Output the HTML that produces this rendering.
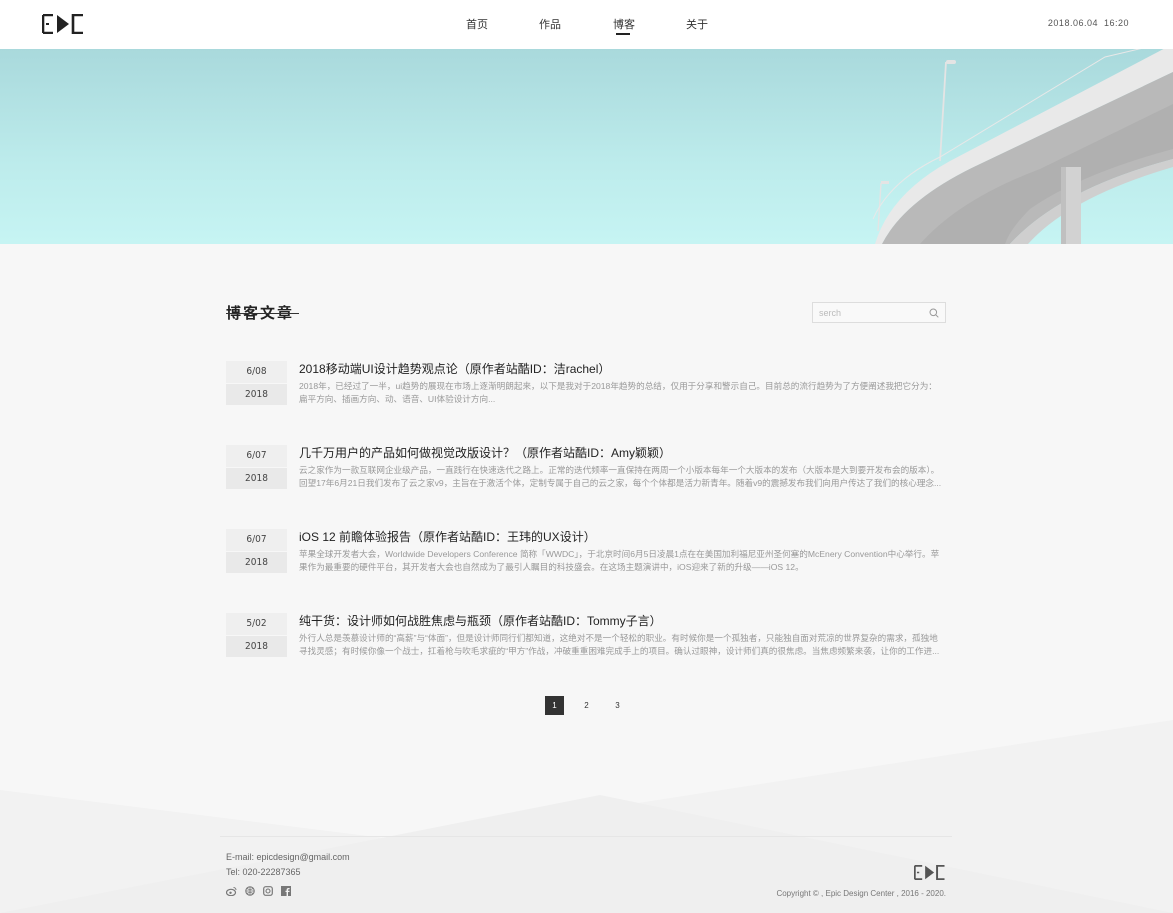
<!DOCTYPE html>
<html><head><meta charset="utf-8">
<style>
*{margin:0;padding:0;box-sizing:border-box}
body{width:1173px;height:913px;overflow:hidden;background:#f7f7f7;font-family:"Liberation Sans","Noto Sans CJK SC",sans-serif;position:relative;color:#333}
.hdr{position:absolute;left:0;top:0;width:1173px;height:49px;background:#fff}
.nav a{position:absolute;top:16px;font-size:11px;color:#333;text-decoration:none}
.date{position:absolute;right:44px;top:18px;font-size:9px;color:#555;letter-spacing:.5px}
.banner{position:absolute;left:0;top:49px;width:1173px;height:195px;background:linear-gradient(180deg,#a9d9dc 0%,#bdecec 60%,#c6f4f3 100%);overflow:hidden}
h2{position:absolute;left:226px;top:302px;font-size:15px;font-weight:bold;letter-spacing:2px;color:#222}
.strike{position:absolute;left:226px;top:313px;width:73px;height:1px;background:#333}
.search{position:absolute;left:812px;top:302px;width:134px;height:21px;border:1px solid #ddd;background:#f9f9f9;font-size:9px;color:#bbb;padding:5px 6px}
.post{position:absolute;left:226px;width:720px}
.d1,.d2{position:absolute;left:0;width:61px;height:22px;font-size:10px;color:#444;text-align:center;line-height:22px;font-family:"DejaVu Sans Condensed","Liberation Sans",sans-serif}
.d1{top:0;background:#efefef}.d2{top:22px;background:#e9e9e9;border-top:1px solid #f7f7f7}
.t{position:absolute;left:73px;top:-1px;font-size:12px;color:#222;white-space:nowrap}
.p{position:absolute;left:73px;top:19px;font-size:8.6px;color:#999;line-height:13px;width:645px;height:26px;overflow:hidden}
.pg{position:absolute;top:696px;width:19px;height:19px;font-size:8px;text-align:center;line-height:19px;color:#333}
.foot{position:absolute;left:226px;font-size:9px;color:#666}
</style></head><body>
<div class="hdr">
<svg style="position:absolute;left:42px;top:14px" width="43" height="20" viewBox="0 0 43 20"><path d="M1 1h10M1 1v18M1 19h10" stroke="#222" stroke-width="2.6" fill="none"/><rect x="4" y="9" width="3" height="2" fill="#222"/><path d="M15 1l12 9-12 9z" fill="#222"/><path d="M41 1h-10v18h10" stroke="#222" stroke-width="2.6" fill="none"/></svg>
<div class="nav"><a style="left:466px">首页</a><a style="left:539px">作品</a><a style="left:613px">博客</a><a style="left:686px">关于</a></div>
<div style="position:absolute;left:616px;top:33px;width:14px;height:2px;background:#222"></div>
<div class="date">2018.06.04 &nbsp;16:20</div>
</div>
<div class="banner">
<svg style="position:absolute;left:860px;top:0" width="313" height="195" viewBox="0 0 313 195">
<line x1="80" y1="112" x2="86" y2="13" stroke="#e4e4e4" stroke-width="1.8"/><rect x="86" y="11" width="10" height="4" rx="2" fill="#e4e4e4"/>
<line x1="18" y1="182" x2="21" y2="134" stroke="#e4e4e4" stroke-width="1.4"/><rect x="21" y="132" width="8" height="3" fill="#e4e4e4"/>
<path d="M13 170 Q30 132 80 108 L245 8 L313 -8" stroke="#e8e8e8" stroke-width="1" fill="none"/>
<path d="M15 195 Q30 145 90 112 L313 -5 L313 23 L120 115 Q45 150 22 195 Z" fill="#e9e9e9"/>
<path d="M22 195 Q45 150 120 115 L313 23 L313 110 Q200 140 150 195 Z" fill="#b9b9b9"/>
<path d="M60 195 Q100 150 180 120 L313 55 L313 100 Q220 125 170 160 Q150 180 145 195 Z" fill="#b0b0b0"/>
<path d="M150 195 Q200 140 313 110 L313 118 Q210 148 168 195Z" fill="#cfcfcf"/>
<rect x="201" y="118" width="20" height="77" fill="#d2d2d2"/><rect x="201" y="118" width="5" height="77" fill="#c0c0c0"/>
</svg>
</div>
<h2>博客文章</h2><div class="strike"></div>
<div class="search">serch<svg style="position:absolute;right:6px;top:5px" width="10" height="10" viewBox="0 0 10 10"><circle cx="4.3" cy="4.3" r="3.3" stroke="#999" fill="none"/><path d="M6.8 6.8l2.5 2.5" stroke="#999"/></svg></div>

<div class="post" style="top:361px"><div class="d1">6/08</div><div class="d2">2018</div><div class="t">2018移动端UI设计趋势观点论（原作者站酷ID：洁rachel）</div><div class="p">2018年，已经过了一半，ui趋势的展现在市场上逐渐明朗起来，以下是我对于2018年趋势的总结，仅用于分享和警示自己。目前总的流行趋势为了方便阐述我把它分为：扁平方向、插画方向、动、语音、UI体验设计方向...</div></div>
<div class="post" style="top:445px"><div class="d1">6/07</div><div class="d2">2018</div><div class="t">几千万用户的产品如何做视觉改版设计？（原作者站酷ID：Amy颖颖）</div><div class="p">云之家作为一款互联网企业级产品，一直践行在快速迭代之路上。正常的迭代频率一直保持在两周一个小版本每年一个大版本的发布（大版本是大到要开发布会的版本）。回望17年6月21日我们发布了云之家v9，主旨在于激活个体，定制专属于自己的云之家，每个个体都是活力新青年。随着v9的震撼发布我们向用户传达了我们的核心理念...</div></div>
<div class="post" style="top:529px"><div class="d1">6/07</div><div class="d2">2018</div><div class="t">iOS 12 前瞻体验报告（原作者站酷ID：王玮的UX设计）</div><div class="p">苹果全球开发者大会，Worldwide Developers Conference 简称「WWDC」，于北京时间6月5日凌晨1点在在美国加利福尼亚州圣何塞的McEnery Convention中心举行。苹果作为最重要的硬件平台，其开发者大会也自然成为了最引人瞩目的科技盛会。在这场主题演讲中，iOS迎来了新的升级——iOS 12。</div></div>
<div class="post" style="top:613px"><div class="d1">5/02</div><div class="d2">2018</div><div class="t">纯干货：设计师如何战胜焦虑与瓶颈（原作者站酷ID：Tommy子言）</div><div class="p">外行人总是羡慕设计师的“高薪”与“体面”，但是设计师同行们都知道，这绝对不是一个轻松的职业。有时候你是一个孤独者，只能独自面对荒凉的世界复杂的需求，孤独地寻找灵感；有时候你像一个战士，扛着枪与吹毛求疵的“甲方”作战，冲破重重困难完成手上的项目。确认过眼神，设计师们真的很焦虑。当焦虑频繁来袭，让你的工作进...</div></div>

<div class="pg" style="left:545px;background:#333;color:#fff">1</div>
<div class="pg" style="left:577px">2</div>
<div class="pg" style="left:608px">3</div>

<svg style="position:absolute;left:0;top:715px" width="1173" height="198"><path d="M0 75 L400 125 L1173 5 L1173 198 L0 198Z" fill="#f2f2f2"/><path d="M0 198 L600 80 L1173 198Z" fill="#efefef"/></svg>
<div style="position:absolute;left:220px;top:836px;width:732px;height:1px;background:#e6e6e6"></div>
<div class="foot" style="top:852px">E-mail: epicdesign@gmail.com</div>
<div class="foot" style="top:867px">Tel: 020-22287365</div>
<div style="position:absolute;left:226px;top:886px;display:flex;gap:8px">
<svg width="11" height="10" viewBox="0 0 11 10"><ellipse cx="5" cy="6.5" rx="4.5" ry="3.2" fill="none" stroke="#777" stroke-width="1.2"/><circle cx="4.5" cy="6.8" r="1.2" fill="#777"/><path d="M7.5 1.5a2.5 2.5 0 012.5 2.5" stroke="#777" fill="none"/></svg>
<svg width="10" height="10" viewBox="0 0 10 10"><circle cx="5" cy="5" r="4.2" fill="none" stroke="#777" stroke-width="1.1"/><path d="M1 5h8M5 1v8M2 2.5q3 2 6 0M2 7.5q3-2 6 0" stroke="#777" stroke-width=".8" fill="none"/></svg>
<svg width="10" height="10" viewBox="0 0 10 10"><rect x=".7" y=".7" width="8.6" height="8.6" rx="2" fill="none" stroke="#777" stroke-width="1.2"/><circle cx="5" cy="5" r="2" fill="none" stroke="#777" stroke-width="1.1"/></svg>
<svg width="10" height="10" viewBox="0 0 10 10"><rect width="10" height="10" fill="#777"/><path d="M7 10V6h1.5V4.7H7V4q0-.8.8-.8h.8V2H7.5Q5.6 2 5.6 3.8v.9H4.5V6h1.1v4" fill="#f4f4f4"/></svg>
</div>
<svg style="position:absolute;left:914px;top:865px" width="32" height="15" viewBox="0 0 43 20"><path d="M1 1h10M1 1v18M1 19h10" stroke="#555" stroke-width="2.6" fill="none"/><rect x="4" y="9" width="3" height="2" fill="#555"/><path d="M15 1l12 9-12 9z" fill="#555"/><path d="M41 1h-10v18h10" stroke="#555" stroke-width="2.6" fill="none"/></svg>
<div style="position:absolute;right:227px;top:889px;font-size:8px;color:#777">Copyright © , Epic Design Center , 2016 - 2020.</div>
</body></html>
